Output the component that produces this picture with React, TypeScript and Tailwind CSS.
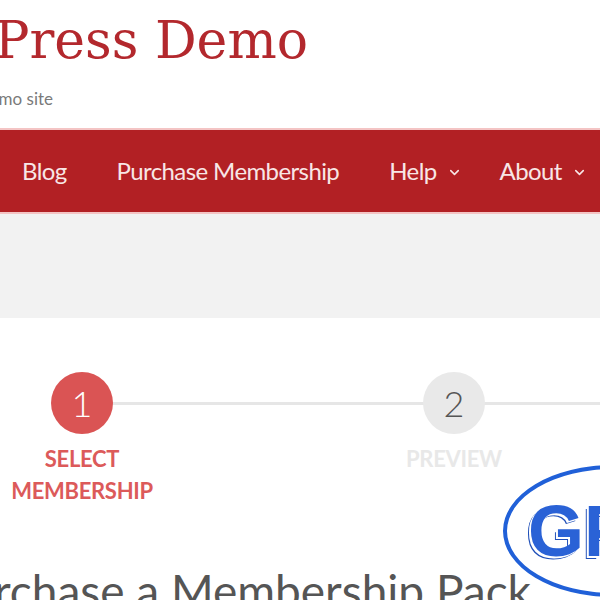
import { ChevronDown } from "lucide-react";

const NAV = [
  { label: "Blog", menu: false, gap: "mr-[50px]" },
  { label: "Purchase Membership", menu: false, gap: "mr-[50px]" },
  { label: "Help", menu: true, gap: "mr-[38px]" },
  { label: "About", menu: true, gap: "" },
];

function Step({ n, label, active }: { n: number; label: string[]; active: boolean }) {
  return (
    <div className="flex w-[160px] flex-col items-center">
      <div
        className={
          active
            ? "flex h-[62px] w-[62px] items-center justify-center rounded-full bg-[#da5454] text-[36px] font-light text-white"
            : "flex h-[62px] w-[62px] items-center justify-center rounded-full bg-[#e9e9e9] text-[36px] font-light text-[#555]"
        }
      >
        {n}
      </div>
      <div
        className={
          active
            ? "mt-[9px] text-center text-[22px] font-bold leading-[32px] tracking-[-0.3px] text-[#dc5a5a]"
            : "mt-[9px] text-center text-[22px] font-bold leading-[32px] tracking-[-0.3px] text-[#e8e8e8]"
        }
      >
        {label.map((l) => (
          <div key={l}>{l}</div>
        ))}
      </div>
    </div>
  );
}

export default function App() {
  return (
    <div className="relative h-[600px] w-[600px] overflow-hidden bg-white font-['Lato','Liberation_Sans',sans-serif]">
      {/* site header */}
      <header className="h-[130px] border-b-2 border-[#f4c4c4]">
        <div className="flex w-[308px] justify-end whitespace-nowrap pt-[14px] font-['DejaVu_Serif',serif] text-[52px] leading-none text-[#b3282d]">
          WordPress Demo
        </div>
        <div className="mt-[24px] flex w-[53px] justify-end whitespace-nowrap text-[17px] leading-none text-[#7a7a7a]">
          Just another demo site
        </div>
      </header>

      {/* main navigation */}
      <nav className="flex h-[84px] items-center border-b-2 border-[#f4c4c4] bg-[#b22024] pl-[22px] text-[24px] tracking-[-0.6px] text-[#f8e6e6]">
        {NAV.map((item) => (
          <span key={item.label} className={`flex items-center gap-[10px] whitespace-nowrap ${item.gap}`}>
            {item.label}
            {item.menu && <ChevronDown size={15} strokeWidth={2.5} className="mt-[3px]" />}
          </span>
        ))}
      </nav>

      <div className="h-[104px] bg-[#f2f2f2]" />

      {/* checkout steps */}
      <div className="relative pt-[54px]">
        <div className="absolute left-[110px] right-0 top-[84px] h-[3px] bg-[#e6e6e6]" />
        <div className="relative flex gap-[212px] pl-[2px]">
          <Step n={1} label={["SELECT", "MEMBERSHIP"]} active />
          <Step n={2} label={["PREVIEW"]} active={false} />
        </div>
      </div>

      <h1 className="absolute left-0 top-[568px] flex w-[531px] justify-end whitespace-nowrap text-[46px] leading-none text-[#555]">
        Purchase a Membership Pack
      </h1>

      {/* watermark logo */}
      <div className="absolute left-[503px] top-[465px] flex h-[132px] w-[220px] items-center rounded-[50%] border-[4px] border-[#2060d8] pl-[21px]">
        <span className="font-['Liberation_Sans',sans-serif] text-[72px] font-bold leading-none text-[#2a62d6] [text-shadow:-1px_1px_0_#fff,-2px_2px_0_#fff,-3px_3px_0_#1f4fb8]">
          GP
        </span>
      </div>
    </div>
  );
}
